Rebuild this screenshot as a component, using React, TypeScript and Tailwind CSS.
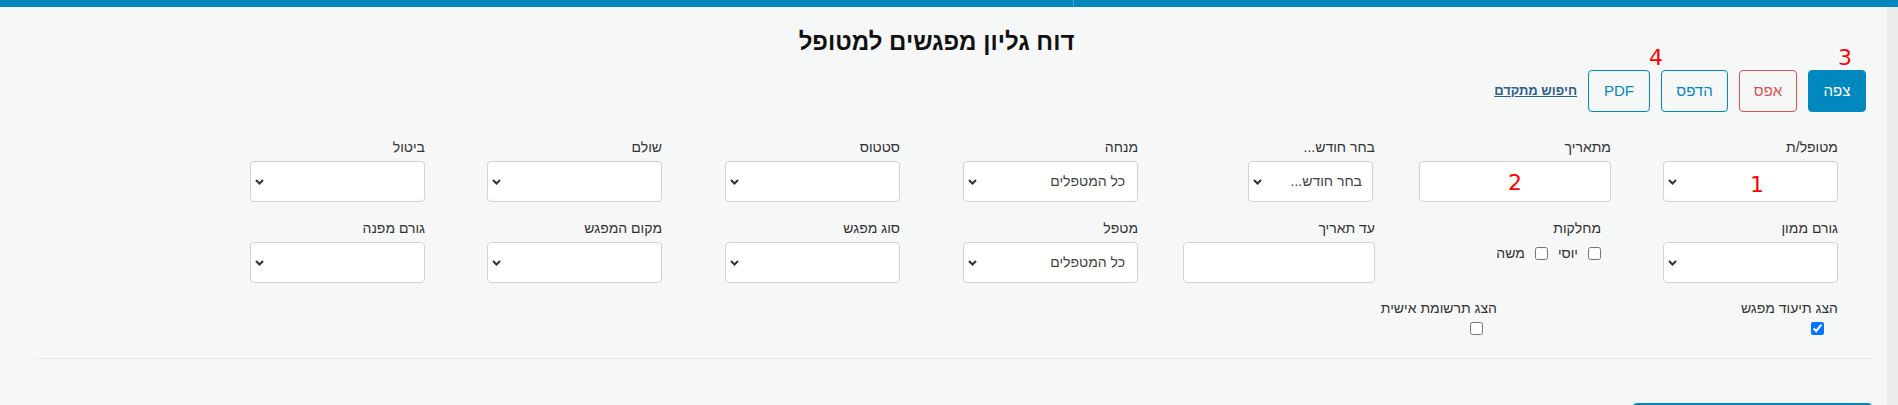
import React from 'react';

type BoxProps = {
  value?: string;
  width: string;
  extra?: string;
  children?: React.ReactNode;
};

function Chevron() {
  return (
    <svg width="9" height="6" viewBox="0 0 9 6" className="shrink-0">
      <path d="M1 1l3.5 3.5L8 1" fill="none" stroke="#333" strokeWidth="2" />
    </svg>
  );
}

// looks like a native select: value on the right, chevron on the left
function SelectBox({ value = '', width, extra = '', children }: BoxProps) {
  return (
    <div
      className={`relative h-[41px] ${width} ${extra} flex items-center justify-between bg-white border border-[#d2d2d2] rounded-[4px] pr-[12px] pl-[4px] text-[14px] text-[#444]`}
    >
      <span>{value}</span>
      <Chevron />
      {children}
    </div>
  );
}

function DateBox({ children }: { children?: React.ReactNode }) {
  return (
    <div className="relative h-[41px] w-[192px] bg-white border border-[#d2d2d2] rounded-[4px]">
      {children}
    </div>
  );
}

function Field({ label, children }: { label: string; children: React.ReactNode }) {
  return (
    <div className="flex flex-col items-start">
      <label className="h-[20px] leading-[20px] text-[14px] text-[#333]">{label}</label>
      <div className="mt-[4px]">{children}</div>
    </div>
  );
}

function Note({ n, pos }: { n: string; pos: string }) {
  return (
    <span
      className={`absolute ${pos} font-['DejaVu_Sans',sans-serif] text-[22px] leading-[22px] text-[#ff0000]`}
    >
      {n}
    </span>
  );
}

export default function App() {
  return (
    <div className="h-[405px] overflow-hidden flex flex-col bg-[#f6f8f8] font-['Liberation_Sans','DejaVu_Sans',Arial,sans-serif]">
      {/* top bar */}
      <div className="h-[7px] flex shrink-0">
        <div className="w-[1073px] bg-[#0088bf]" />
        <div className="w-px bg-[#3fa3cd]" />
        <div className="flex-1 bg-[#0088bf]" />
      </div>

      <div className="flex flex-1 min-h-0">
        <main dir="rtl" className="flex-1 pr-[15px] pl-[35px]">
          <h1 className="pt-[19px] pr-[34px] text-center text-[24px] leading-[32px] font-bold text-[#111]">
            דוח גליון מפגשים למטופל
          </h1>

          {/* Actions */}
          <div className="mt-[12px] pr-[6px] flex items-center gap-[11px]">
            <button className="relative w-[58px] h-[42px] rounded-[4px] border border-[#0088bf] bg-[#0088bf] text-white text-[15px]">
              צפה
              <Note n="3" pos="left-[29px] top-[-24px]" />
            </button>
            <button className="w-[58px] h-[42px] rounded-[4px] border border-[#d9534f] text-[#d9534f] text-[15px]">
              אפס
            </button>
            <button className="relative w-[67px] h-[42px] rounded-[4px] border border-[#0088bf] text-[#0088bf] text-[15px]">
              הדפס
              <Note n="4" pos="left-[-13px] top-[-24px]" />
            </button>
            <button className="w-[62px] h-[42px] rounded-[4px] border border-[#0088bf] text-[#0088bf] text-[15px]">
              PDF
            </button>
            <a href="#" className="text-[13px] font-bold text-[#2b5f8e] underline">
              חיפוש מתקדם
            </a>
          </div>

          {/* Filters */}
          <div className="mt-[25px] pr-[34px]">
            <div className="grid grid-cols-[227px_236px_237px_238px_238px_237px_237px]">
              <Field label="מטופל/ת">
                <SelectBox width="w-[175px]">
                  <Note n="1" pos="left-[86px] top-[12px]" />
                </SelectBox>
              </Field>
              <Field label="מתאריך">
                <DateBox>
                  <Note n="2" pos="left-[88px] top-[10px]" />
                </DateBox>
              </Field>
              <Field label="בחר חודש...">
                <SelectBox width="w-[125px]" extra="mr-[2px] !pr-[10px]" value="בחר חודש..." />
              </Field>
              <Field label="מנחה">
                <SelectBox width="w-[175px]" value="כל המטפלים" />
              </Field>
              <Field label="סטטוס">
                <SelectBox width="w-[175px]" />
              </Field>
              <Field label="שולם">
                <SelectBox width="w-[175px]" />
              </Field>
              <Field label="ביטול">
                <SelectBox width="w-[175px]" />
              </Field>
            </div>

            <div className="mt-[16px] grid grid-cols-[227px_236px_237px_238px_238px_237px_237px]">
              <Field label="גורם ממון">
                <SelectBox width="w-[175px]" />
              </Field>
              <div className="pr-[10px] flex flex-col items-start">
                <label className="h-[20px] leading-[20px] text-[14px] text-[#333]">מחלקות</label>
                <div className="mt-[7px] flex items-center gap-[10px] text-[14px] text-[#333] leading-[16px]">
                  <input type="checkbox" className="m-0 w-[13px] h-[13px]" />
                  <span>יוסי</span>
                  <input type="checkbox" className="m-0 w-[13px] h-[13px]" />
                  <span>משה</span>
                </div>
              </div>
              <Field label="עד תאריך">
                <DateBox />
              </Field>
              <Field label="מטפל">
                <SelectBox width="w-[175px]" value="כל המטפלים" />
              </Field>
              <Field label="סוג מפגש">
                <SelectBox width="w-[175px]" />
              </Field>
              <Field label="מקום המפגש">
                <SelectBox width="w-[175px]" />
              </Field>
              <Field label="גורם מפנה">
                <SelectBox width="w-[175px]" />
              </Field>
            </div>

            <div className="mt-[15px] flex">
              <div className="w-[341px] flex flex-col items-start">
                <label className="h-[20px] leading-[20px] text-[14px] text-[#333]">הצג תיעוד מפגש</label>
                <input type="checkbox" defaultChecked className="mt-[4px] mr-[14px] ml-0 mb-0 w-[13px] h-[13px]" />
              </div>
              <div className="flex flex-col items-start">
                <label className="h-[20px] leading-[20px] text-[14px] text-[#333]">הצג תרשומת אישית</label>
                <input type="checkbox" className="mt-[4px] mr-[14px] ml-0 mb-0 w-[13px] h-[13px]" />
              </div>
            </div>
          </div>

          <div className="mt-[23px] h-px bg-[#e6e9ea]" />

          <div className="mt-[44px] h-[40px] w-[239px] rounded-[4px] bg-[#0088bf]" />
        </main>

        {/* scrollbar track */}
        <div className="w-[11px] shrink-0 bg-[#ececec]" />
      </div>
    </div>
  );
}
